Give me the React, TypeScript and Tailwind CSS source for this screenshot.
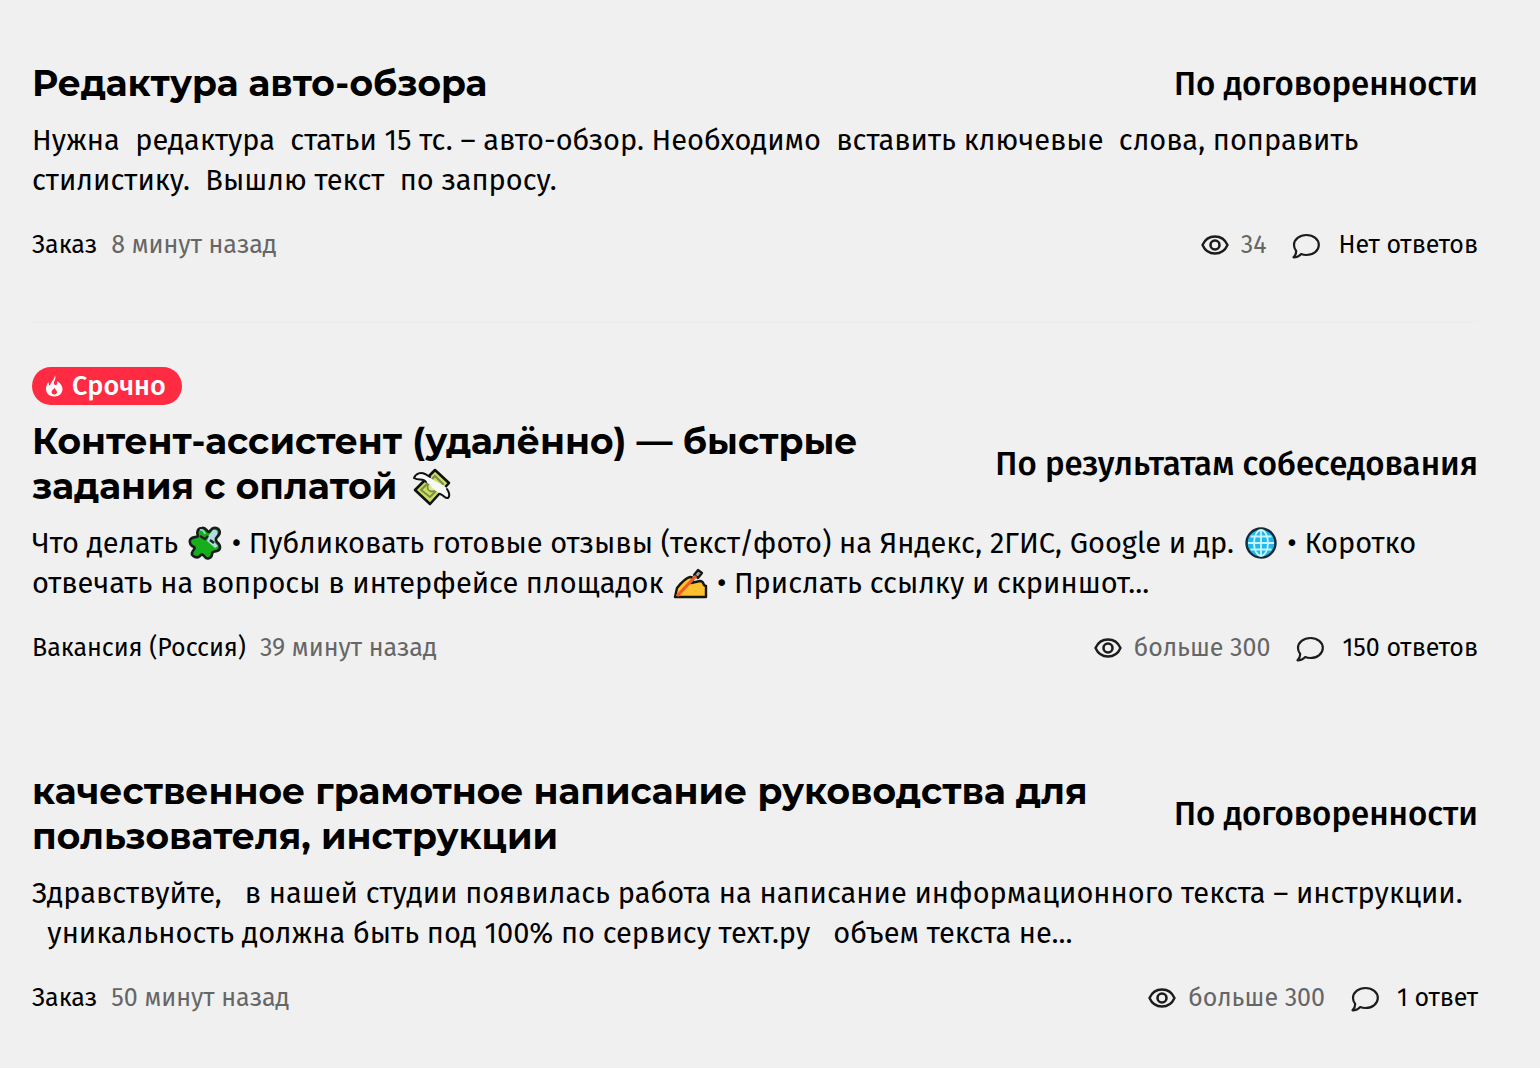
import type { ReactNode } from "react";

interface Job {
  id: number;
  urgent?: boolean;
  title: ReactNode;
  price: string;
  description: ReactNode;
  kind: string;
  time: string;
  views: string;
  answers: string;
}

const EyeIcon = () => (
  <svg className="h-7 w-7" viewBox="0 0 28 28" fill="none" stroke="#1c1c1c" aria-hidden="true">
    <path d="M1.5 14C4 8.300 8.500 5.500 14 5.500S24 8.300 26.500 14C24 19.700 19.500 22.500 14 22.500S4 19.700 1.500 14Z" strokeWidth="2.400" strokeLinejoin="round" />
    <circle cx="14" cy="14" r="4.500" strokeWidth="2.600" />
  </svg>
);

const CommentIcon = () => (
  <svg className="h-7 w-7" viewBox="0 0 28 28" fill="none" stroke="#1c1c1c" aria-hidden="true">
    <path
      d="M14.500 4C21.500 4 26.800 8.500 26.800 14S21.500 24 14.500 24C12.500 24 10.800 23.700 9.200 23C7.500 25 4.500 26.300 1.500 26.300C3.300 24.500 4.200 22.500 4.200 20C2.800 18.200 2 16.200 2 14C2 8.500 7.500 4 14.500 4Z"
      strokeWidth="2.200"
      strokeLinejoin="round"
    />
  </svg>
);

const FireIcon = () => (
  <svg className="h-6 w-5" viewBox="0 0 20 24" fill="currentColor" aria-hidden="true">
    <path d="M11 1C12 4 11 6 10 8C9.500 10 10.500 11.500 12 11C13.500 10.500 13.500 8.500 13 7C16.500 9 18.500 12 18.500 15C18.500 19.500 15 22.500 10.500 22.500C5.500 22.500 2 19.500 2 15C2 12 3 10 4.500 8C4.500 10 5 11 6 12C6.500 7.500 11 5.500 11 1Z" />
    <path className="text-[#ff2b43]" d="M10.500 13.500C10.500 15.500 13 16 13 18C13 19.500 12 20.500 10.300 20.500C8.600 20.500 7.500 19.500 7.500 18C7.500 16 10 15.500 10.500 13.500Z" />
  </svg>
);

const MoneyIcon = () => (
  <svg className="ml-1 inline-block h-10 w-10 align-[-8px]" viewBox="0 0 40 40" role="img" aria-label="Деньги">
    <path d="M3 23L23 3L37 16L18 37Z" fill="#c8e05e" stroke="#111" strokeWidth="2.600" strokeLinejoin="round" />
    <path d="M9 23L23 9L31 17L18 30Z" fill="none" stroke="#7b8a52" strokeWidth="2" />
    <circle cx="20" cy="20" r="4.500" fill="#d6ec7c" stroke="#7b8a52" strokeWidth="1.800" />
    <path
      d="M2 11C4 6 9 5 13 7C17 9 19 12 23 14C28 17 33 18 35 22C37 25 38 29 36 31C33 32 32 28 28 26C23 25 20 20 17 17C12 12 7 14 2 11Z"
      fill="#f7f7f7"
    />
    <path d="M2 11C4 6 9 5 13 7L18 10M2 11C7 14 11 11 14 15M35 22C37 25 38 29 36 31C33 32 32 28 28 27" fill="none" stroke="#111" strokeWidth="2" strokeLinecap="round" />
  </svg>
);

const PuzzleIcon = () => (
  <svg className="mx-px inline-block h-9 w-9 align-[-8px]" viewBox="0 0 36 36" role="img" aria-label="Пазл">
    <path
      d="M11 11C9 7 11 3 15 3C19 2 20 7 22 7C24 6 24 2 29 3C33 4 34 8 31 11C29 13 28 14 30 17C34 20 34 25 30 26C27 27 25 26 25 29C25 33 20 35 18 32C16 29 14 29 13 31C10 34 4 31 5 28C6 24 9 24 7 22C4 21 2 18 3 15C5 11 9 13 11 11Z"
      fill="#18ad1c"
      stroke="#151d1a"
      strokeWidth="2.600"
      strokeLinejoin="round"
    />
    <path d="M22 10L26 5C30 4 32 8 29 11C27 13 27 15 28 18L31 21L28 23L20 16Z" fill="#b9d6ea" />
    <path d="M13 11L18 14L21 11M23 15L27 18" fill="none" stroke="#222" strokeWidth="2.400" />
    <path d="M13 5C16 4 17 6 18 9" fill="none" stroke="#a9ccd8" strokeWidth="1.800" />
  </svg>
);

const GlobeIcon = () => (
  <svg className="mx-px inline-block h-9 w-9 align-[-8px]" viewBox="0 0 36 36" role="img" aria-label="Глобус">
    <circle cx="18" cy="18" r="14.500" fill="#22b8ec" stroke="#162936" strokeWidth="2.400" />
    <g fill="none" stroke="#c6f4ff" strokeWidth="1.800">
      <ellipse cx="18" cy="18" rx="7" ry="13" />
      <path d="M18 5V31M5 18H31M7.500 11.500H28.500M7.500 24.500H28.500" />
    </g>
  </svg>
);

const WritingIcon = () => (
  <svg className="mx-px inline-block h-9 w-9 align-[-8px]" viewBox="0 0 36 36" role="img" aria-label="Пишущая рука">
    <path d="M3 32L5 23C9 18 14 13 18 12C22 12 22 15 19 18L28 16C33 16 30 21 34 21V32Z" fill="#fcbf2d" stroke="#171510" strokeWidth="2.400" strokeLinejoin="round" />
    <path d="M22 10L26 5L30 8L26 13Z" fill="#9aa5aa" stroke="#171510" strokeWidth="2.200" strokeLinejoin="round" />
    <path d="M5 31L24 11" stroke="#ec5a28" strokeWidth="3.200" />
  </svg>
);

const jobs: Job[] = [
  {
    id: 1,
    title: "Редактура авто-обзора",
    price: "По договоренности",
    description:
      "Нужна \u00a0редактура \u00a0статьи 15 тс. – авто-обзор. Необходимо \u00a0вставить ключевые \u00a0слова, поправить стилистику. \u00a0Вышлю текст \u00a0по запросу.",
    kind: "Заказ",
    time: "8 минут назад",
    views: "34",
    answers: "Нет ответов",
  },
  {
    id: 2,
    urgent: true,
    title: (
      <>
        Контент-ассистент (удалённо) — быстрые задания с оплатой&nbsp;
        <MoneyIcon />
      </>
    ),
    price: "По результатам собеседования",
    description: (
      <>
        Что делать <PuzzleIcon /> • Публиковать готовые отзывы (текст/фото) на Яндекс, 2ГИС, Google и др.{" "}
        <GlobeIcon /> • Коротко отвечать на вопросы в интерфейсе площадок <WritingIcon /> • Прислать ссылку и
        скриншот...
      </>
    ),
    kind: "Вакансия (Россия)",
    time: "39 минут назад",
    views: "больше 300",
    answers: "150 ответов",
  },
  {
    id: 3,
    title: "качественное грамотное написание руководства для пользователя, инструкции",
    price: "По договоренности",
    description:
      "Здравствуйте, \u00a0\u00a0в нашей студии появилась работа на написание информационного текста – инструкции. \u00a0\u00a0уникальность должна быть под 100% по сервису техт.ру \u00a0\u00a0объем текста не...",
    kind: "Заказ",
    time: "50 минут назад",
    views: "больше 300",
    answers: "1 ответ",
  },
];

const JobCard = ({ job }: { job: Job }) => {
  return (
    <article className="border-b border-transparent pt-11 pb-15 first:border-b-2 first:border-[#eeeeee]">
      {job.urgent && (
        <span className="mb-3.5 flex h-[38px] w-fit items-center gap-2 rounded-full bg-[#ff2b43] pr-4 pl-3 text-[27px] font-medium text-white">
          <FireIcon />
          Срочно
        </span>
      )}
      <div className="flex items-center justify-between gap-16">
        <h2 className="font-['Montserrat','Inter',sans-serif] text-[36px] leading-[45px] font-bold">
          <a href="#">{job.title}</a>
        </h2>
        <span className="shrink-0 text-[33px] leading-[40px] font-medium">{job.price}</span>
      </div>
      <p className="mt-[15px] text-[29px] leading-[40px]">{job.description}</p>
      <div className="mt-7 flex items-center justify-between text-[25px] leading-[32px]">
        <div className="flex gap-3.5">
          <span>{job.kind}</span>
          <span className="text-[#666]">{job.time}</span>
        </div>
        <div className="flex items-center">
          <EyeIcon />
          <span className="ml-3 text-[#666]">{job.views}</span>
          <a href="#" className="ml-[26px] flex items-center gap-[18px]">
            <CommentIcon />
            {job.answers}
          </a>
        </div>
      </div>
    </article>
  );
};

export default function App() {
  return (
    <main className="min-h-screen bg-[#f0f0f0] pt-[17px] pr-[62px] pl-8 font-['Fira_Sans','Roboto',sans-serif] text-black">
      {jobs.map((job) => (
        <JobCard key={job.id} job={job} />
      ))}
    </main>
  );
}
